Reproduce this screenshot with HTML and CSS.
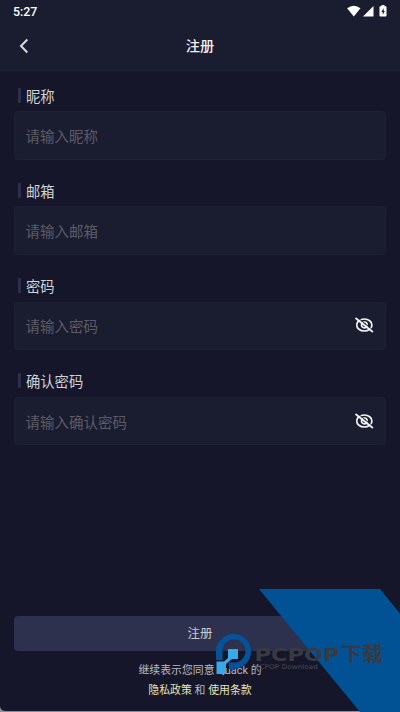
FILE: index.html
```html
<!DOCTYPE html>
<html lang="zh-CN">
<head>
<meta charset="utf-8">
<title>注册</title>
<link rel="stylesheet" href="styles.css">
</head>
<body>
<div class="screen">
  <header class="top">
    <div class="status">
      <span class="time">5:27</span>
      <svg class="status-icons" width="42" height="14" viewBox="0 0 42 14" fill="#fff">
        <path d="M0.3 3.2Q7 -1.8 13.7 3.2L7 11.5Z" transform="translate(1.8 0)"/>
        <path d="M28.5 1V11.5H18Z"/>
        <path fill-rule="evenodd" d="M39.5 1.2V0h-3v1.2h-1.2q-.8 0-.8.8v8.8q0 .8.8.8h5.4q.8 0 .8-.8V2q0-.8-.8-.8ZM38.7 3.3L36.3 7h1.4v2.8L39.9 6H38.7Z"/>
      </svg>
    </div>
    <div class="nav">
      <svg class="back" width="10" height="16" viewBox="0 0 10 16" fill="none" stroke="#d8d8dc" stroke-width="2"><path d="M8.3 1.5L2 8l6.3 6.5"/></svg>
      <h1>注册</h1>
    </div>
  </header>
  <main class="form">
    <div class="field"><label>昵称</label><div class="box">请输入昵称</div></div>
    <div class="field"><label>邮箱</label><div class="box">请输入邮箱</div></div>
    <div class="field"><label>密码</label><div class="box">请输入密码
      <svg class="eye" width="20" height="16" viewBox="0 0 20 16" fill="none" stroke="#f4f4f6" stroke-width="1.7"><ellipse cx="10.3" cy="8" rx="7.6" ry="6"/><circle cx="10.3" cy="8" r="2.8"/><path stroke="#1a1c2f" stroke-width="1" d="M3 .2L19.4 13.4"/><path d="M1.5 1L18.9 15"/></svg></div></div>
    <div class="field"><label>确认密码</label><div class="box">请输入确认密码
      <svg class="eye" width="20" height="16" viewBox="0 0 20 16" fill="none" stroke="#f4f4f6" stroke-width="1.7"><ellipse cx="10.3" cy="8" rx="7.6" ry="6"/><circle cx="10.3" cy="8" r="2.8"/><path stroke="#1a1c2f" stroke-width="1" d="M3 .2L19.4 13.4"/><path d="M1.5 1L18.9 15"/></svg></div></div>
  </main>
  <footer class="bottom">
    <div class="submit">注册</div>
    <p class="terms">继续表示您同意 Quack 的<br><a>隐私政策</a> 和 <a>使用条款</a></p>
  </footer>
</div>
<svg class="watermark" width="190" height="123" viewBox="210 589 190 123">
  <path fill="#005294" d="M259 589H380L400 613.5V712H360Z"/>
  <path fill="#04529a" fill-rule="evenodd" d="M216 660V651.5A17.5 17.5 0 1 1 234 669H229V662.5H234A11.5 11.5 0 1 0 222.5 651V660Z"/>
  <path fill="#36a9e8" d="M228 649H238V659H232L226 664V674H216.5V661.5H224L228 658Z"/>
  <g fill="#383a42" class="brand">
    <text class="latin" x="254.5" y="661" textLength="85" lengthAdjust="spacingAndGlyphs">PCPOP</text>
    <text class="cjk" x="341" y="661" textLength="42" lengthAdjust="spacingAndGlyphs">下载</text>
    <text class="small" x="255" y="669" textLength="63" lengthAdjust="spacingAndGlyphs">PCPOP Download</text>
  </g>
</svg>
</body>
</html>
```
FILE: styles.css
```css
* { box-sizing: border-box; }
body {
  margin: 0;
  background: #8c8c96;
  font-family: Roboto, "Noto Sans CJK SC", sans-serif;
}
.screen {
  width: 400px;
  height: 711px;
  display: flex;
  flex-direction: column;
  background: #15162a;
  border-radius: 0 0 0 5px;
}
.top {
  height: 71px;
  background: #1a1c30;
  border-bottom: 1px solid #1f2539;
}
.status {
  height: 22px;
  padding: 0 13px;
  display: flex;
  justify-content: space-between;
  align-items: center;
}
.time { font-size: 12.4px; font-weight: 500; color: #fff; }
.status-icons { margin-top: 2px; }
.nav {
  height: 47px;
  display: grid;
  grid-template-columns: 60px 1fr 60px;
  align-items: center;
}
.back { margin-left: 19px; }
h1 {
  margin: -1px 0 0;
  font-size: 14.2px;
  font-weight: 500;
  color: #f2f2f4;
  text-align: center;
}
.form {
  padding: 13.2px 14px 0;
  display: flex;
  flex-direction: column;
  gap: 20px;
  flex: 1;
}
.field { height: 75.2px; }
label {
  display: flex;
  align-items: center;
  height: 22px;
  margin: 0 0 5px 4px;
  font-size: 14.3px;
  color: #d2d2d4;
}
label::before {
  content: "";
  width: 2.5px;
  height: 15px;
  margin-right: 5.5px;
  border-radius: 1px;
  background: #2d304c;
}
.box {
  height: 48.5px;
  padding: 0 11px 0 10.5px;
  display: flex;
  align-items: center;
  justify-content: space-between;
  background: #1a1c2f;
  border: 1px solid #1e2136;
  border-radius: 4px;
  font-size: 14.5px;
  color: #5b5c67;
}
.eye { margin-top: -1px; }
.bottom { padding: 0 14px; height: 95px; }
.submit {
  height: 35px;
  line-height: 35px;
  border-radius: 4px;
  background: #2e314d;
  color: #c9cad2;
  font-size: 12.4px;
  text-align: center;
}
.terms {
  margin: 10px 0 0;
  font-size: 10.9px;
  line-height: 20px;
  text-align: center;
  color: #b9bac1;
}
.terms a { color: #e6e4b8; }
.watermark { position: absolute; left: 210px; top: 589px; }
.latin { font: 700 18px "DejaVu Sans", sans-serif; }
.cjk { font: 700 19px "Noto Sans CJK SC", sans-serif; }
.small { font: 6.5px "DejaVu Sans", sans-serif; fill: #484a52; }
```
